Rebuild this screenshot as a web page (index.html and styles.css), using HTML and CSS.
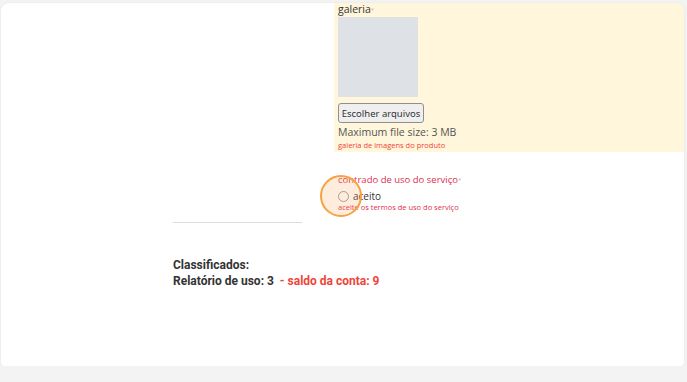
FILE: index.html
```html
<!DOCTYPE html>
<html lang="pt-BR">
<head>
    <meta charset="UTF-8">
    <meta name="viewport" content="width=device-width, initial-scale=1.0">
    <title>Classificados</title>
    <link rel="stylesheet" href="styles.css">
</head>
<body>

    <!-- Cartão principal do formulário -->
    <div class="card">
        <div class="col-left"></div>

        <div class="galeria">
            <label class="field-label">galeria<span class="req">*</span></label>
            <div class="preview"></div>
            <button class="file-btn">Escolher arquivos</button>
            <div class="file-info">Maximum file size: 3 MB</div>
            <div class="help">galeria de imagens do produto</div>
        </div>

        <div class="col-left line-cell">
            <div class="divider"></div>
        </div>

        <div class="contrato">
            <div class="contrato-title">contrado de uso do serviço<span class="req">*</span></div>
            <label class="radio-row">
                <span class="radio"></span>
                <span>aceito</span>
            </label>
            <div class="help pink">aceite os termos de uso do serviço</div>
            <span class="touch"></span>
        </div>

        <div class="resumo">
            <div>Classificados:</div>
            <div>Relatório de uso: 3 &nbsp;<span class="saldo">- saldo da conta: 9</span></div>
        </div>
    </div>

</body>
</html>
```

FILE: styles.css
```css
/* Estilos gerais */
body, html {
    margin: 0;
    padding: 0;
    background-color: #f3f3f3;
    font-family: "Open Sans", "Noto Sans", sans-serif;
    color: #333;
}

.card {
    display: grid;
    grid-template-columns: 333px 1fr;
    grid-template-rows: 149px 71px auto;
    margin: 3px 3px 0 1px;
    height: 363px;
    background-color: #fff;
    border-radius: 8px 8px 4px 4px;
    box-shadow: 0 0 2px rgba(0, 0, 0, 0.08);
}

/* Painel da galeria */
.galeria {
    display: flex;
    flex-direction: column;
    align-items: flex-start;
    background-color: #fff6db;
    border-top-right-radius: 8px;
    padding: 0 4px;
}

.field-label {
    font-size: 10.5px;
    line-height: 12px;
    color: #333;
}

.req {
    color: #d9a3a3;
    font-size: 6px;
    vertical-align: middle;
}

.preview {
    width: 80px;
    height: 80px;
    background-color: #dee2e6;
    margin-top: 1px;
}

.file-btn {
    margin-top: 6px;
    height: 20px;
    width: 86px;
    padding: 0;
    font-family: "Noto Sans", sans-serif;
    font-size: 9.5px;
    color: #333;
    background-color: #efefef;
    border: 1px solid #8f8f8f;
    border-radius: 3px;
}

.file-info {
    margin-top: 2px;
    font-size: 10.5px;
    line-height: 14px;
    color: #555;
}

.help {
    font-size: 7.5px;
    line-height: 11px;
    color: #f0443a;
    margin-top: 1px;
}

.help.pink {
    color: #e0304e;
    margin-top: 0;
}

/* Linha da coluna esquerda */
.line-cell {
    display: flex;
    align-items: flex-end;
    padding-left: 172px;
}

.divider {
    width: 129px;
    height: 1px;
    background-color: #ddd;
}

/* Contrato de uso */
.contrato {
    position: relative;
    padding: 22px 4px 0 4px;
}

.contrato-title {
    font-size: 9.5px;
    line-height: 12px;
    color: #e0304e;
}

.radio-row {
    display: flex;
    align-items: center;
    gap: 4px;
    font-size: 10px;
    line-height: 12px;
    color: #333;
    margin-top: 4px;
}

.radio {
    width: 9px;
    height: 9px;
    border: 1px solid #999;
    border-radius: 50%;
    background-color: #fff;
}

/* indicador de toque por cima */
.touch {
    position: absolute;
    left: -14px;
    top: 23px;
    width: 38px;
    height: 38px;
    border: 2px solid #f7a13f;
    border-radius: 50%;
    background-color: rgba(252, 170, 100, 0.22);
}

/* Resumo */
.resumo {
    grid-column: 1 / 3;
    padding: 34px 0 0 172px;
    font-family: Roboto, "Liberation Sans", sans-serif;
    font-weight: bold;
    font-size: 12px;
    line-height: 16px;
    color: #333;
}

.saldo {
    color: #f0443a;
}
```
